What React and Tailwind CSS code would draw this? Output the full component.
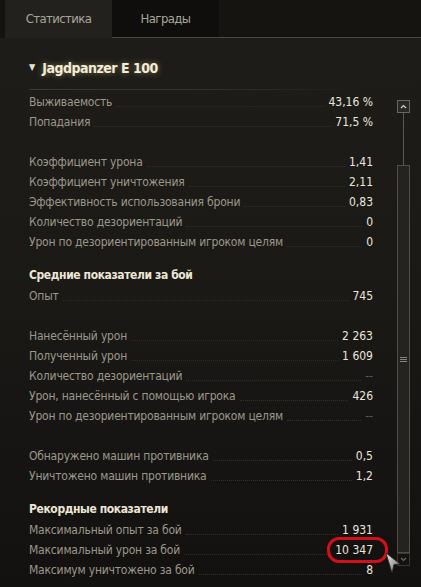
import React from "react";

const groups = [
  {
    rows: [
      ["Выживаемость", "43,16 %"],
      ["Попадания", "71,5 %"],
      null,
      ["Коэффициент урона", "1,41"],
      ["Коэффициент уничтожения", "2,11"],
      ["Эффективность использования брони", "0,83"],
      ["Количество дезориентаций", "0"],
      ["Урон по дезориентированным игроком целям", "0"],
    ],
  },
  {
    title: "Средние показатели за бой",
    rows: [
      ["Опыт", "745"],
      null,
      ["Нанесённый урон", "2 263"],
      ["Полученный урон", "1 609"],
      ["Количество дезориентаций", "--"],
      ["Урон, нанесённый с помощью игрока", "426"],
      ["Урон по дезориентированным игроком целям", "--"],
      null,
      ["Обнаружено машин противника", "0,5"],
      ["Уничтожено машин противника", "1,2"],
    ],
  },
  {
    title: "Рекордные показатели",
    rows: [
      ["Максимальный опыт за бой", "1 931"],
      ["Максимальный урон за бой", "10 347", true],
      ["Максимум уничтожено за бой", "8"],
    ],
  },
];

const StatRow = ({ label, value, marked }) => (
  <div className="relative flex h-5 items-center">
    <span className="tracking-[-0.2px] text-[#9d978b]">{label}</span>
    <span className="mx-1 mb-[-9px] flex-1 border-b border-dotted border-[#302e29]" />
    <span className={value === "--" ? "text-[#5f5b53]" : "text-[#ebe6dc]"}>{value}</span>
    {marked && (
      <div className="absolute right-[-15px] top-[-3px] h-[26px] w-[61px] rounded-[12px] border-[3px] border-[#d3101a]" />
    )}
  </div>
);

export default function App() {
  return (
    <div className="relative h-[587px] w-[421px] overflow-hidden bg-gradient-to-b from-[#1e1d19] via-[#1a1916] to-[#121110] font-['DejaVu_Sans',sans-serif] text-[12px] [font-stretch:condensed]">
      {/* tabs */}
      <div className="flex h-[38px]">
        <div className="w-[5px] bg-[#141311]" />
        <div className="flex w-[107px] items-center justify-center bg-[#22211d] text-[13px] tracking-[-0.6px] text-[#aaa59b]">
          Статистика
        </div>
        <div className="flex w-[107px] items-center justify-center border-b border-[#4b4741] bg-[#0f0e0c] text-[13px] tracking-[-0.6px] text-[#aaa59b]">
          Награды
        </div>
        <div className="flex-1 border-b border-[#4b4741] bg-[#151411]" />
      </div>

      <div className="flex">
        <div className="w-[373px] pl-[29px]">
          <div className="mt-[10px] flex h-10 items-center gap-[7px]">
            <span className="text-[9px] text-[#e8e2d2]">▼</span>
            <span className="text-[14px] font-bold tracking-[-0.5px] text-[#f3ecd6] [text-shadow:0_0_6px_rgba(255,225,160,0.45)]">
              Jagdpanzer E 100
            </span>
          </div>
          <div className="mt-px h-px w-[332px] bg-gradient-to-r from-[#3c3933] via-[#36332e] to-transparent" />

          <div className="pt-[2px]">
            {groups.map((g, gi) => (
              <div key={gi}>
                {g.title && (
                  <div className="mt-3 flex h-[22px] items-center font-bold tracking-[-0.4px] text-[#ece6d6]">{g.title}</div>
                )}
                {g.rows.map((r, ri) =>
                  r ? <StatRow key={ri} label={r[0]} value={r[1]} marked={r[2]} /> : <div key={ri} className="h-5" />
                )}
              </div>
            ))}
          </div>
        </div>

        {/* scrollbar */}
        <div className="ml-[24px] mt-[62px] flex w-[13px] flex-col items-center">
          <div className="flex h-[13px] w-[13px] items-center justify-center border border-[#6a665d] bg-[#2a2824]">
            <svg width="7" height="5" viewBox="0 0 7 5">
              <path d="M1 4 L3.5 1.5 L6 4" fill="none" stroke="#d6d0c4" strokeWidth="1.2" />
            </svg>
          </div>
          <div className="h-[52px] w-px bg-[#5c5850]" />
          <div className="flex h-[388px] w-[13px] flex-col items-center justify-center gap-[1px] border border-[#514d45] bg-[#24231f]">
            <div className="h-px w-[7px] bg-[#8a857a]" />
            <div className="h-px w-[7px] bg-[#8a857a]" />
            <div className="h-px w-[7px] bg-[#8a857a]" />
          </div>
          <div className="flex h-[13px] w-[13px] items-center justify-center border border-[#3a3731]">
            <svg width="7" height="5" viewBox="0 0 7 5">
              <path d="M1 1 L3.5 3.5 L6 1" fill="none" stroke="#6f6a60" strokeWidth="1.2" />
            </svg>
          </div>
        </div>
      </div>

      {/* mouse cursor */}
      <svg className="absolute left-[384px] top-[551px]" width="18" height="24" viewBox="0 0 18 24">
        <defs>
          <linearGradient id="cur" x1="0" y1="0" x2="1" y2="1">
            <stop offset="0" stopColor="#f4f4f4" />
            <stop offset="1" stopColor="#5e5e5e" />
          </linearGradient>
        </defs>
        <path d="M2 2 L16 13 L10 13.5 L8 22 Z" fill="url(#cur)" stroke="#262626" strokeWidth="0.8" />
      </svg>
    </div>
  );
}
